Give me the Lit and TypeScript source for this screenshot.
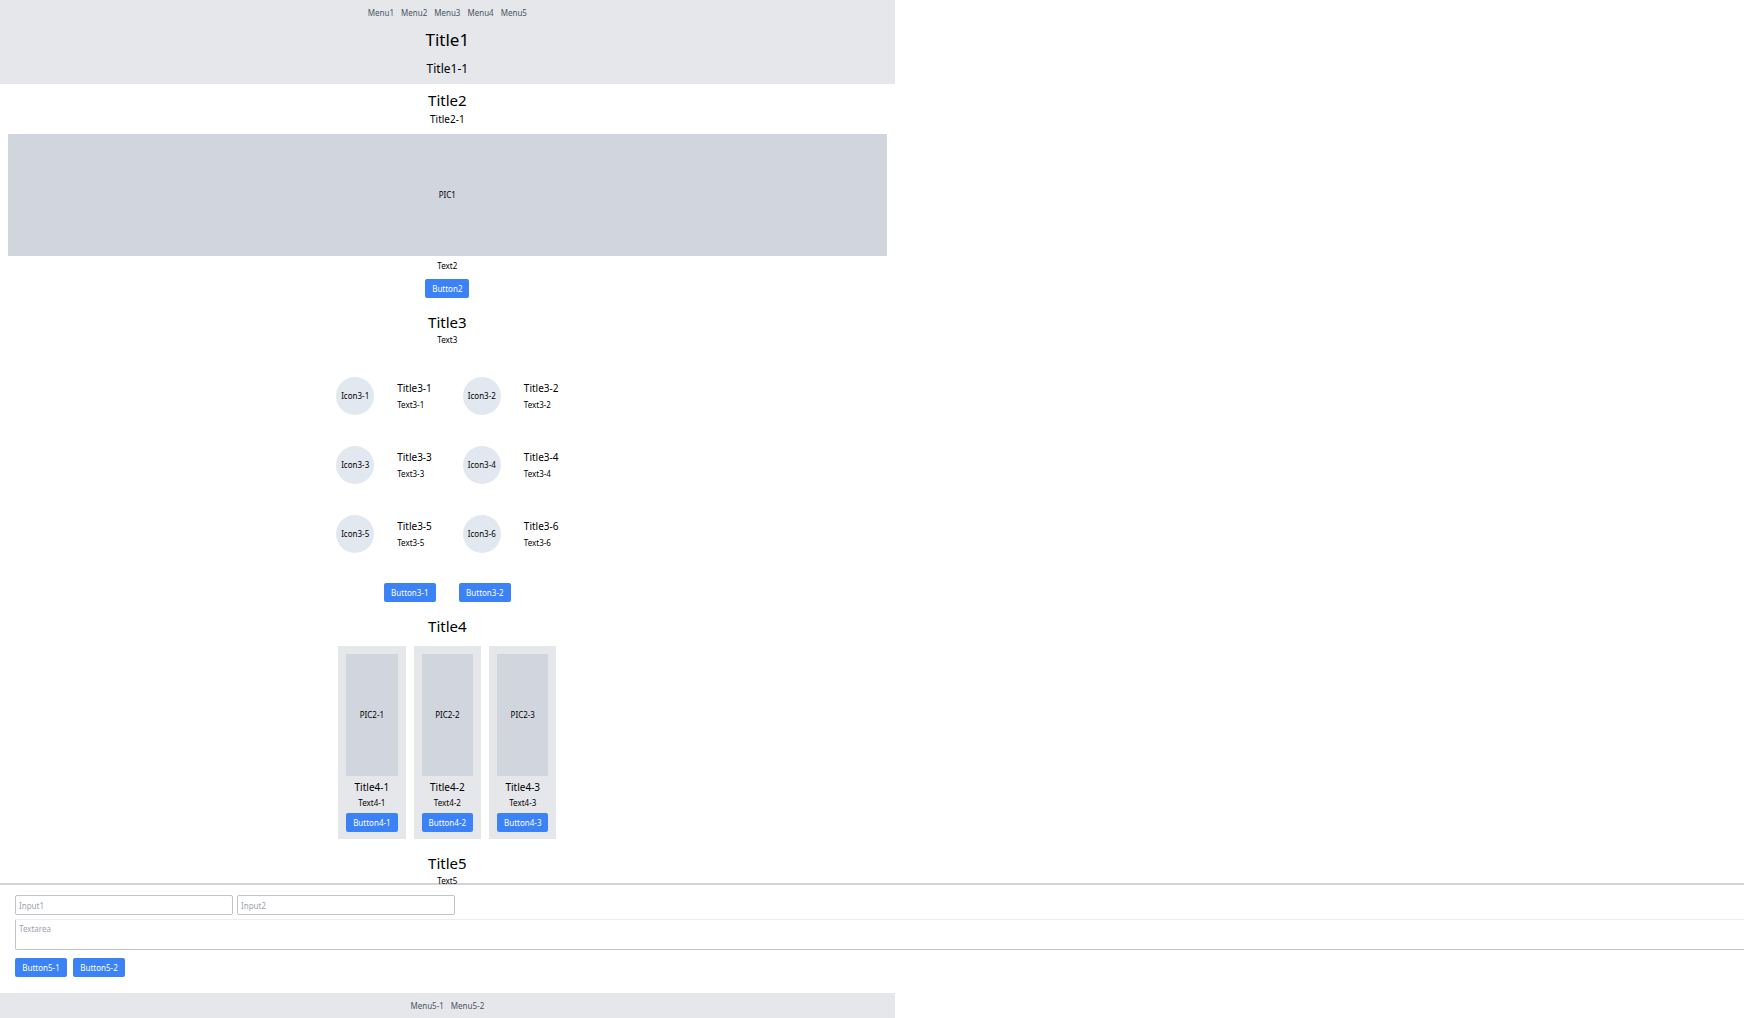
import { LitElement, html, css } from "lit";
import { customElement } from "lit/decorators.js";

const MENU = ["Menu1", "Menu2", "Menu3", "Menu4", "Menu5"];
const FOOTER_MENU = ["Menu5-1", "Menu5-2"];
const FEATURES = [1, 2, 3, 4, 5, 6];
const CARDS = [1, 2, 3];

@customElement("app-root")
export class AppRoot extends LitElement {
  static styles = css`
    :host {
      display: block;
      min-height: 100vh;
      overflow: hidden;
      background: #fff;
      color: #000;
      font-family: "Noto Sans", "Open Sans", sans-serif;
      font-size: 8px;
      line-height: 12px;
    }
    * {
      box-sizing: border-box;
    }
    h1,
    h2,
    h3,
    p {
      margin: 0;
      font-weight: 400;
    }
    .column {
      width: 51.3%;
    }
    .stack {
      display: flex;
      flex-direction: column;
      align-items: center;
    }
    .header {
      gap: 8px;
      padding: 6px 8px;
      background: #e5e7eb;
    }
    .menu {
      display: flex;
      justify-content: center;
      gap: 7px;
      line-height: 14px;
    }
    .menu a {
      color: #4b5563;
      text-decoration: none;
    }
    .hero {
      font-size: 17px;
      line-height: 24px;
    }
    .tagline {
      font-size: 12px;
      line-height: 18px;
    }
    .title {
      font-size: 15px;
      line-height: 20px;
    }
    .subtitle {
      font-size: 10px;
      line-height: 14px;
    }
    .section {
      gap: 2px;
      padding: 14px 8px 0;
    }
    .section.first {
      padding-top: 6px;
    }
    .picture {
      display: flex;
      align-items: center;
      justify-content: center;
      align-self: stretch;
      height: 122px;
      background: #d1d5dd;
    }
    .wide {
      margin: 6px 0 2px;
    }
    button {
      height: 19px;
      padding: 0 7px;
      border: 0;
      border-radius: 2px;
      background: #3b82f6;
      color: #fff;
      font: inherit;
    }
    .first button {
      margin-top: 5px;
    }
    .features {
      display: grid;
      grid-template-columns: auto auto;
      gap: 31px;
      margin-top: 29px;
    }
    .feature {
      display: flex;
      align-items: center;
      gap: 23px;
    }
    .icon {
      display: flex;
      align-items: center;
      justify-content: center;
      width: 38px;
      height: 38px;
      border-radius: 50%;
      background: #e2e8f0;
      white-space: nowrap;
    }
    .caption {
      display: flex;
      flex-direction: column;
      gap: 4px;
    }
    .actions {
      display: flex;
      gap: 23px;
      margin-top: 28px;
    }
    .actions button,
    .submit button {
      min-width: 52px;
    }
    .cards {
      display: flex;
      gap: 8px;
      margin-top: 8px;
    }
    .card {
      gap: 3px;
      padding: 8px 8px 7px;
      background: #e5e7eb;
    }
    .card .picture {
      margin-bottom: 1px;
    }
    .card button {
      margin-top: 1px;
    }
    .form {
      display: flex;
      flex-direction: column;
      gap: 4px;
      margin-top: -4px;
      padding: 10px 0 16px 15px;
      border-top: 2px solid #d4d4d6;
    }
    .fields {
      display: flex;
      gap: 4px;
    }
    input,
    textarea {
      display: block;
      margin: 0;
      padding: 3px;
      border: 1px solid #c0c3c9;
      border-radius: 2px;
      background: transparent;
      color: inherit;
      font: inherit;
      resize: none;
    }
    input {
      width: 12.5vw;
      height: 20px;
    }
    textarea {
      width: 100%;
      height: 31px;
      border-top-color: #ededef;
      border-right: 0;
      border-radius: 2px 0 0 2px;
    }
    ::placeholder {
      color: #9ca3af;
      opacity: 1;
    }
    .submit {
      display: flex;
      gap: 6px;
      margin-top: 4px;
    }
    .footer {
      padding: 6px 8px 5px;
      background: #e5e7eb;
    }
  `;

  private menu(items: string[], label: string) {
    return html`<nav class="menu" aria-label=${label}>
      ${items.map((item) => html`<a href="#">${item}</a>`)}
    </nav>`;
  }

  render() {
    return html`
      <header class="column stack header">
        ${this.menu(MENU, "Main")}
        <h1 class="hero">Title1</h1>
        <p class="tagline">Title1-1</p>
      </header>
      <main>
        <section class="column stack section first">
          <h2 class="title">Title2</h2>
          <h3 class="subtitle">Title2-1</h3>
          <div class="picture wide">PIC1</div>
          <p>Text2</p>
          <button type="button">Button2</button>
        </section>
        <section class="column stack section">
          <h2 class="title">Title3</h2>
          <p>Text3</p>
          <div class="features">
            ${FEATURES.map(
              (n) => html`<article class="feature">
                <div class="icon">Icon3-${n}</div>
                <div class="caption">
                  <h3 class="subtitle">Title3-${n}</h3>
                  <p>Text3-${n}</p>
                </div>
              </article>`
            )}
          </div>
          <div class="actions">
            <button type="button">Button3-1</button>
            <button type="button">Button3-2</button>
          </div>
        </section>
        <section class="column stack section">
          <h2 class="title">Title4</h2>
          <div class="cards">
            ${CARDS.map(
              (n) => html`<article class="stack card">
                <div class="picture">PIC2-${n}</div>
                <h3 class="subtitle">Title4-${n}</h3>
                <p>Text4-${n}</p>
                <button type="button">Button4-${n}</button>
              </article>`
            )}
          </div>
        </section>
        <section class="column stack section">
          <h2 class="title">Title5</h2>
          <p>Text5</p>
        </section>
        <form class="form">
          <div class="fields">
            <input type="text" placeholder="Input1" aria-label="Input1" />
            <input type="text" placeholder="Input2" aria-label="Input2" />
          </div>
          <textarea placeholder="Textarea" aria-label="Textarea"></textarea>
          <div class="submit">
            <button type="button">Button5-1</button>
            <button type="button">Button5-2</button>
          </div>
        </form>
      </main>
      <footer class="column footer">${this.menu(FOOTER_MENU, "Footer")}</footer>
    `;
  }
}
